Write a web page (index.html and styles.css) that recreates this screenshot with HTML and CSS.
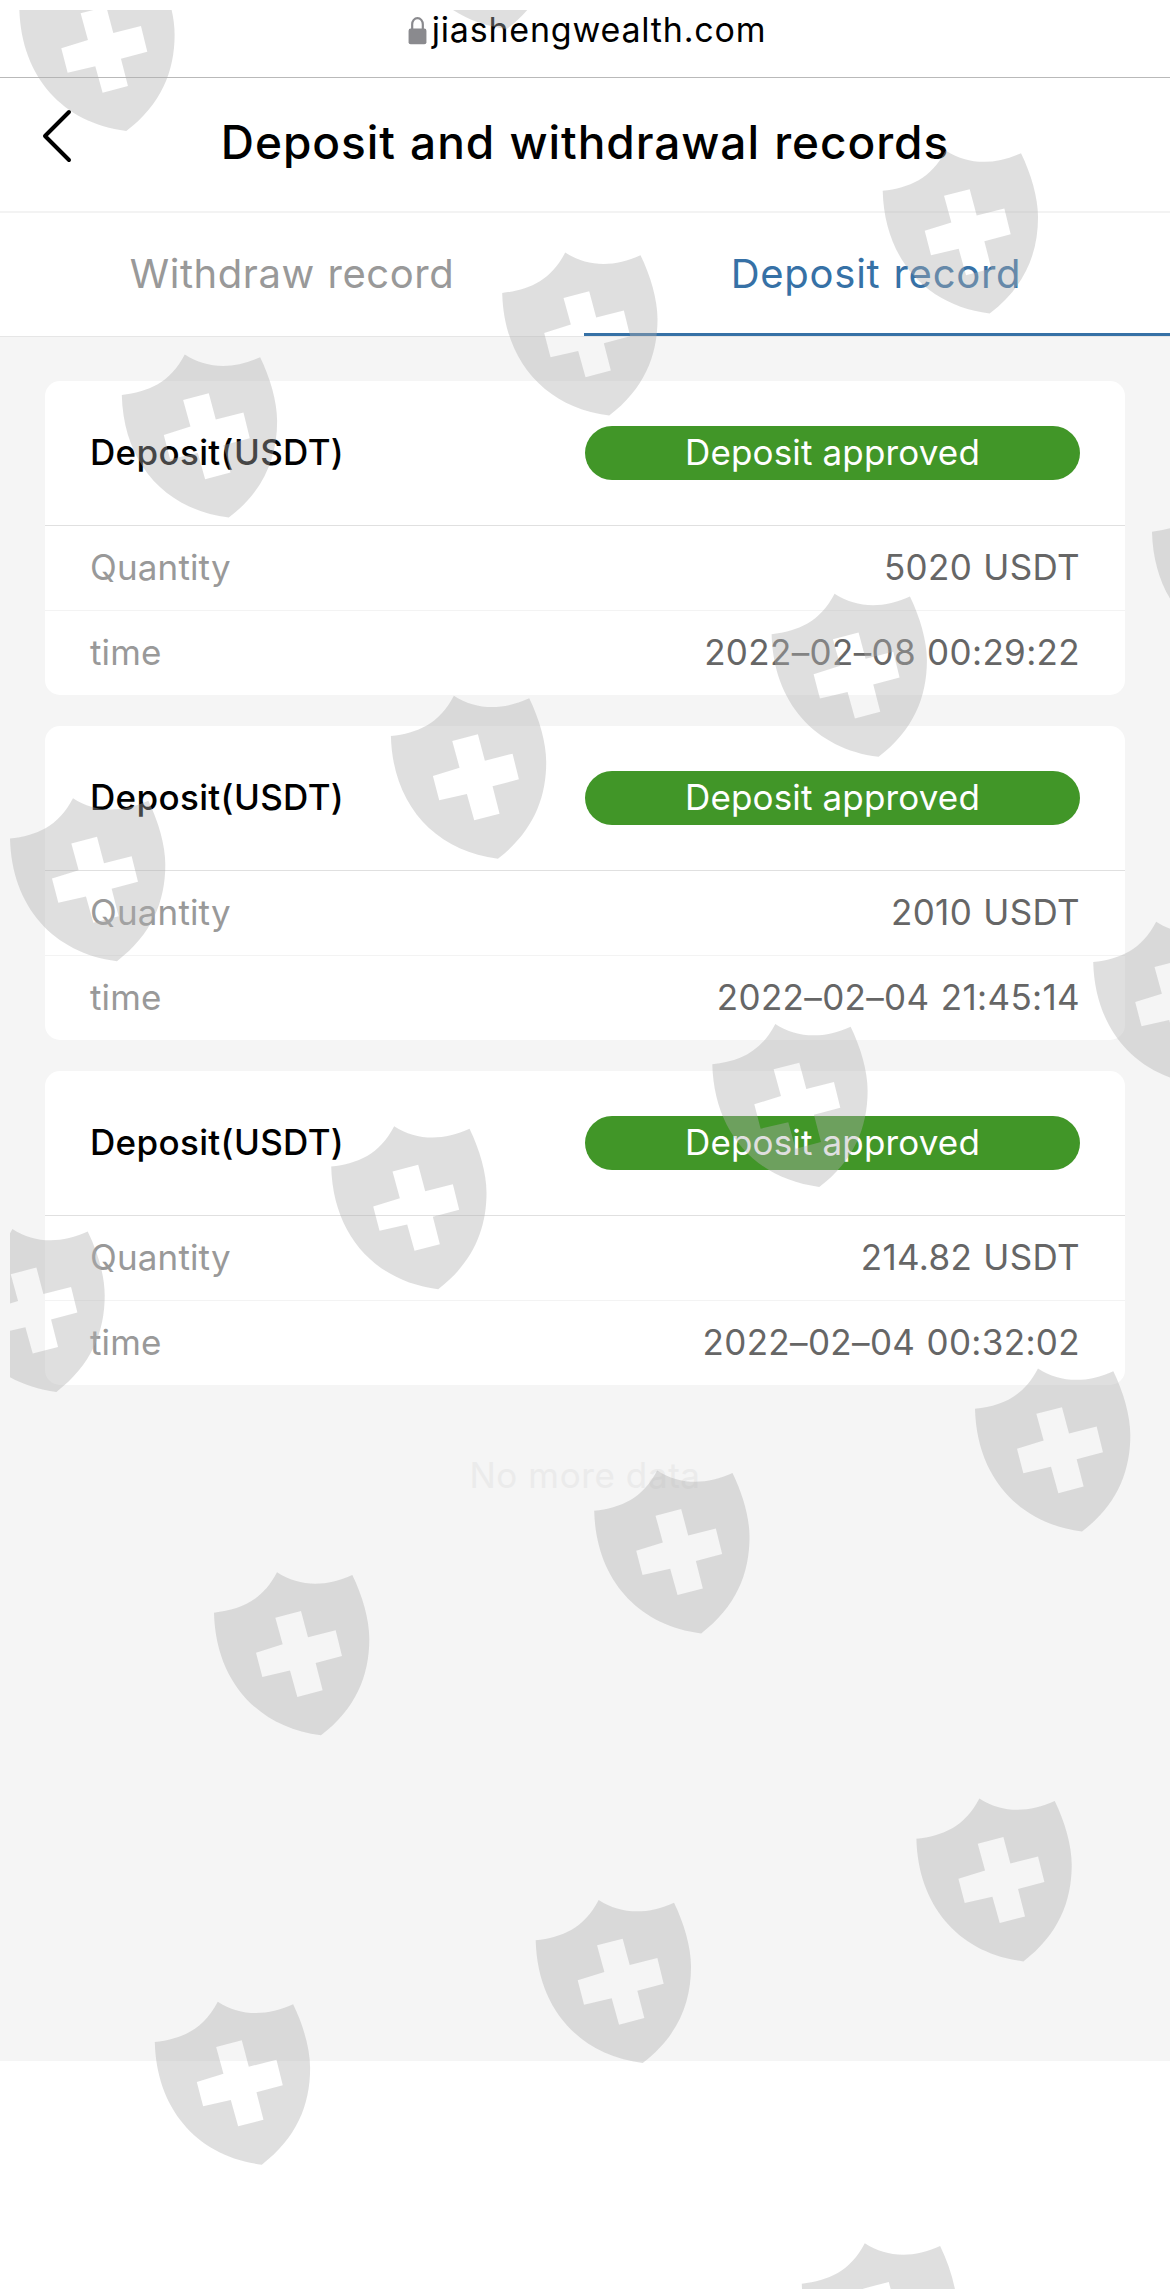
FILE: index.html
```html
<!DOCTYPE html>
<html lang="en">
<head>
  <meta charset="UTF-8" />
  <meta name="viewport" content="width=device-width, initial-scale=1.0" />
  <title>Deposit and withdrawal records</title>
  <link rel="stylesheet" href="styles.css">
</head>
<body>
  <div class="address-bar">
    <svg class="lock" viewBox="0 0 20 30">
      <path d="M4.4 14V8.5a5.6 6.6 0 0 1 11.2 0V14" fill="none" stroke="#8a8a8e" stroke-width="2.3" />
      <rect x="0.6" y="13" width="18.8" height="16.5" rx="2.2" fill="#8a8a8e" />
    </svg>
    <span class="domain">jiashengwealth.com</span>
  </div>

  <header class="header">
    <a class="back" href="#" aria-label="Back">
      <svg viewBox="0 0 32 56">
        <path d="M29 4L5 28l24 24" fill="none" stroke="#000" stroke-width="4" stroke-linecap="round" stroke-linejoin="round" />
      </svg>
    </a>
    <h1>Deposit and withdrawal records</h1>
  </header>

  <nav class="tabs">
    <div class="tab">Withdraw record</div>
    <div class="tab active">Deposit record</div>
  </nav>

  <main class="list">
    <section class="card">
      <div class="card-head">
        <span class="card-title">Deposit(USDT)</span>
        <span class="status">Deposit approved</span>
      </div>
      <div class="row">
        <span class="label">Quantity</span>
        <span class="value">5020 USDT</span>
      </div>
      <div class="row">
        <span class="label">time</span>
        <span class="value">2022–02–08 00:29:22</span>
      </div>
    </section>

    <section class="card">
      <div class="card-head">
        <span class="card-title">Deposit(USDT)</span>
        <span class="status">Deposit approved</span>
      </div>
      <div class="row">
        <span class="label">Quantity</span>
        <span class="value">2010 USDT</span>
      </div>
      <div class="row">
        <span class="label">time</span>
        <span class="value">2022–02–04 21:45:14</span>
      </div>
    </section>

    <section class="card">
      <div class="card-head">
        <span class="card-title">Deposit(USDT)</span>
        <span class="status">Deposit approved</span>
      </div>
      <div class="row">
        <span class="label">Quantity</span>
        <span class="value">214.82 USDT</span>
      </div>
      <div class="row">
        <span class="label">time</span>
        <span class="value">2022–02–04 00:32:02</span>
      </div>
    </section>

    <p class="no-more">No more data</p>
  </main>

  <!-- Shield watermark over the whole page -->
  <svg class="watermark" viewBox="10 10 1160 2279">
    <defs>
      <path id="shield" transform="scale(0.3333)" fill-rule="evenodd" d="M0 121C80 112 145 85 189 0C255 43 335 45 415 8C445 70 466 140 466 200C466 310 425 410 321 489C130 465 5 325 0 121ZM184 136L206 216L126 241L145 314L228 295L250 374L326 354L305 272L384 251L365 174L282 195L261 116Z" />
    </defs>
    <use href="#shield" x="19.3" y="-32" />
    <use href="#shield" x="399.8" y="-134" />
    <use href="#shield" x="882.7" y="150.5" />
    <use href="#shield" x="502.2" y="252.6" />
    <use href="#shield" x="121.8" y="354.6" />
    <use href="#shield" x="1152" y="491.3" />
    <use href="#shield" x="771.6" y="593.8" />
    <use href="#shield" x="390.9" y="695.7" />
    <use href="#shield" x="10" y="798.2" />
    <use href="#shield" x="1093.2" y="921.7" />
    <use href="#shield" x="712.3" y="1024" />
    <use href="#shield" x="331.2" y="1126.2" />
    <use href="#shield" x="-50.6" y="1228.9" />
    <use href="#shield" x="975" y="1368.5" />
    <use href="#shield" x="594.2" y="1470.4" />
    <use href="#shield" x="214" y="1572.3" />
    <use href="#shield" x="916.4" y="1798.4" />
    <use href="#shield" x="535.7" y="1900" />
    <use href="#shield" x="154.8" y="2001.7" />
    <use href="#shield" x="801.8" y="2243.3" />
  </svg>
</body>
</html>
```

FILE: styles.css
```css
/* Reset & basic styling */
* {
  box-sizing: border-box;
  margin: 0;
  padding: 0;
}
body {
  position: relative;
  width: 1170px;
  height: 2289px;
  overflow: hidden;
  font-family: Inter, "Liberation Sans", sans-serif;
  font-size: 35px;
  line-height: 1.2;
  background: #fff;
  color: #000;
}

/* Browser address bar */
.address-bar {
  display: flex;
  justify-content: center;
  align-items: center;
  gap: 5px;
  height: 78px;
  padding: 0 0 17px 4px;
  border-bottom: 1px solid #b9b9b9;
}
.lock {
  width: 19px;
  height: 29px;
}
.domain {
  font-size: 34px;
  letter-spacing: 0.8px;
}

/* Page header */
.header {
  display: grid;
  grid-template-columns: 110px 1fr 110px;
  align-items: center;
  height: 135px;
  padding-bottom: 3px;
  border-bottom: 2px solid #f3f3f3;
}
.back {
  padding: 0 0 14px 40px;
}
.back svg {
  display: block;
  width: 32px;
  height: 56px;
}
h1 {
  font-size: 46px;
  font-weight: 500;
  text-align: center;
  letter-spacing: 0.95px;
  word-spacing: 1px;
}

/* Tabs */
.tabs {
  display: flex;
  height: 124px;
  border-bottom: 1px solid #e6e6e6;
}
.tab {
  flex: 1;
  display: flex;
  align-items: center;
  justify-content: center;
  padding-top: 1px;
  font-size: 40px;
  letter-spacing: 0.55px;
  word-spacing: 1px;
  color: #999;
  border-bottom: 3px solid transparent;
}
.tab.active {
  padding-right: 2px;
  letter-spacing: 0.75px;
  color: #3671a6;
  border-bottom-color: #3671a6;
}

/* Record list */
.list {
  display: flex;
  flex-direction: column;
  gap: 31px;
  height: 1724px;
  padding: 44px 45px;
  background: #f5f5f5;
}
.card {
  background: #fff;
  border-radius: 15px;
}
.card-head,
.row {
  display: flex;
  align-items: center;
  justify-content: space-between;
  padding: 0 45px;
}
.card-head {
  height: 145px;
  border-bottom: 1px solid #e0e0e0;
}
.row {
  height: 84px;
  padding-bottom: 2px;
}
.row + .row {
  height: 85px;
  border-top: 1px solid #f3f3f3;
}
.card-title {
  padding-bottom: 2px;
  font-weight: 500;
  letter-spacing: 0.35px;
}
.status {
  width: 495px;
  height: 54px;
  line-height: 53px;
  border-radius: 27px;
  background: #419628;
  color: #fff;
  text-align: center;
  letter-spacing: 0.15px;
}
.label {
  color: #999;
  letter-spacing: 0.15px;
}
.value {
  color: #666;
  letter-spacing: 0.35px;
  word-spacing: 1px;
}
.no-more {
  margin-top: 38px;
  text-align: center;
  letter-spacing: 0.6px;
  color: #ebebeb;
}

/* Watermark */
.watermark {
  position: absolute;
  top: 10px;
  left: 10px;
  width: 1160px;
  height: 2279px;
  fill: rgba(176, 176, 176, 0.4);
  pointer-events: none;
}
```
